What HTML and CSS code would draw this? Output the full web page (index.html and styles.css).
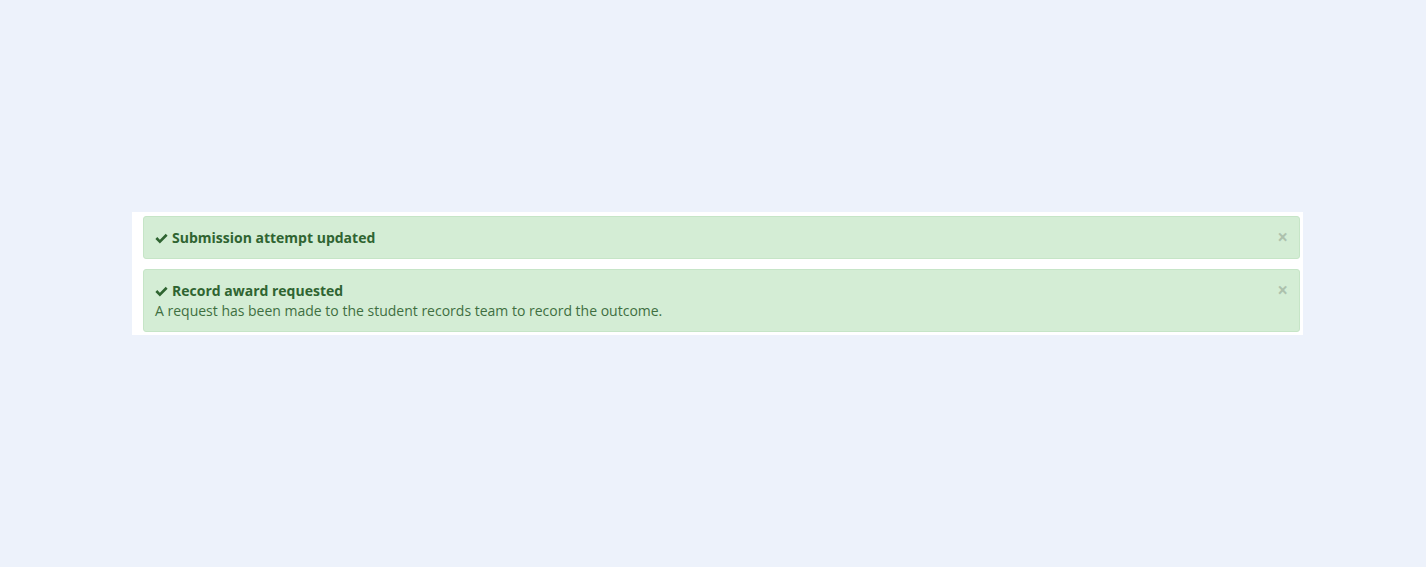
FILE: index.html
```html
<!DOCTYPE html>
<html lang="en">
<head>
    <meta charset="UTF-8">
    <title>Messages</title>
    <link rel="stylesheet" href="styles.css">
</head>
<body>
    <div class="messages">
        <div class="alert">
            <span class="close">&times;</span>
            <div class="alert-title">
                <svg class="check" viewBox="0 0 16 13"><path d="M0.5 7 L2.8 4.7 L6 7.9 L13.2 0.7 L15.5 3 L6 12.5 Z"/></svg>
                Submission attempt updated
            </div>
        </div>
        <div class="alert">
            <span class="close">&times;</span>
            <div class="alert-title">
                <svg class="check" viewBox="0 0 16 13"><path d="M0.5 7 L2.8 4.7 L6 7.9 L13.2 0.7 L15.5 3 L6 12.5 Z"/></svg>
                Record award requested
            </div>
            <div class="alert-body">A request has been made to the student records team to record the outcome.</div>
        </div>
    </div>
</body>
</html>
```

FILE: styles.css
```css
* {
    margin: 0;
    padding: 0;
    box-sizing: border-box;
    font-family: 'Open Sans', 'Noto Sans', sans-serif;
}

body {
    background-color: #edf2fb;
    min-height: 100vh;
    padding-top: 212px;
}

.messages {
    background-color: white;
    width: 1171px;
    margin-left: 132px;
    padding: 4px 3px 3px 11px;
    display: flex;
    flex-direction: column;
    gap: 10px;
}

.alert {
    position: relative;
    background-color: #d4edd5;
    border: 1px solid #c6e5c7;
    border-radius: 3px;
    padding: 11px 11px 10px;
    color: #3a6e3c;
    font-size: 14px;
    line-height: 20px;
}

.alert-title {
    font-weight: 700;
    color: #2f6431;
    display: flex;
    align-items: center;
    gap: 4px;
}

.check {
    width: 13px;
    height: 11px;
    fill: #2f6431;
}

.alert-body {
    color: #3f6f41;
}

.close {
    position: absolute;
    right: 11px;
    top: 10px;
    font-size: 19px;
    font-weight: 700;
    line-height: 20px;
    color: #000;
    opacity: 0.18;
}
```
